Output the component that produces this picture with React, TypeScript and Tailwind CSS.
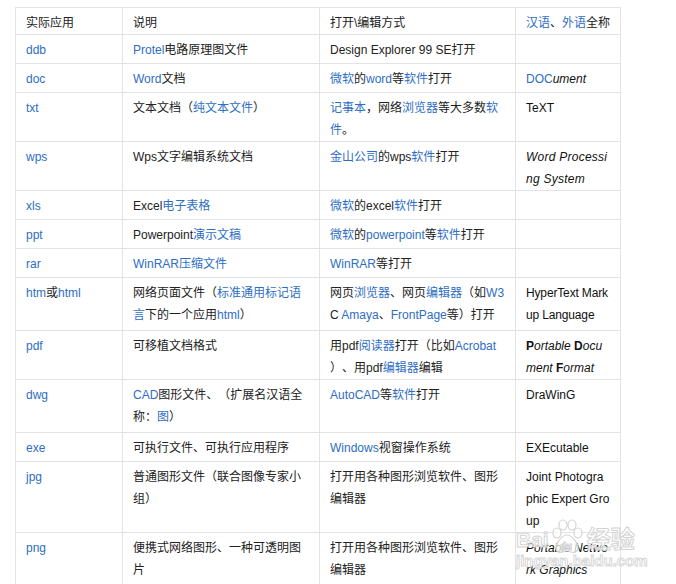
import type { ReactNode } from "react";

const A = ({ children }: { children: ReactNode }) => (
  <span className="text-[#2e6ec4]">{children}</span>
);
const B = ({ children }: { children: ReactNode }) => (
  <b className="font-bold">{children}</b>
);
const I = ({ children }: { children: ReactNode }) => <i className="italic">{children}</i>;

type Row = { h: string; ext: ReactNode; desc: ReactNode; open: ReactNode; full: ReactNode };

const rows: Row[] = [
  { h: "h-[29px]", ext: <A>ddb</A>, desc: <><A>Protel</A>电路原理图文件</>, open: "Design Explorer 99 SE打开", full: null },
  {
    h: "h-[29px]",
    ext: <A>doc</A>,
    desc: <><A>Word</A>文档</>,
    open: <><A>微软</A>的<A>word</A>等<A>软件</A>打开</>,
    full: <><A>DOC</A><I>ument</I></>,
  },
  {
    h: "h-[49px]",
    ext: <A>txt</A>,
    desc: <>文本文档（<A>纯文本文件</A>）</>,
    open: <><A>记事本</A>，网络<A>浏览器</A>等大多数<A>软件</A>。</>,
    full: "TeXT",
  },
  {
    h: "h-[49px]",
    ext: <A>wps</A>,
    desc: "Wps文字编辑系统文档",
    open: <><A>金山公司</A>的wps<A>软件</A>打开</>,
    full: <i className="italic tracking-[0.25px]">Word Processing System</i>,
  },
  { h: "h-[29px]", ext: <A>xls</A>, desc: <>Excel<A>电子表格</A></>, open: <><A>微软</A>的excel<A>软件</A>打开</>, full: null },
  {
    h: "h-[29px]",
    ext: <A>ppt</A>,
    desc: <>Powerpoint<A>演示文稿</A></>,
    open: <><A>微软</A>的<A>powerpoint</A>等<A>软件</A>打开</>,
    full: null,
  },
  { h: "h-[29px]", ext: <A>rar</A>, desc: <A>WinRAR压缩文件</A>, open: <><A>WinRAR</A>等打开</>, full: null },
  {
    h: "h-[53px]",
    ext: <><A>htm</A>或<A>html</A></>,
    desc: <>网络页面文件（<A>标准通用标记语言</A>下的一个应用<A>html</A>）</>,
    open: <>网页<A>浏览器</A>、网页<A>编辑器</A>（如<A>W3</A>C <A>Amaya</A>、<A>FrontPage</A>等）打开</>,
    full: <span className="tracking-[-0.15px]">HyperText Markup Language</span>,
  },
  {
    h: "h-[49px]",
    ext: <A>pdf</A>,
    desc: "可移植文档格式",
    open: <>用pdf<A>阅读器</A>打开（比如<A>Acrobat</A>）、用pdf<A>编辑器</A>编辑</>,
    full: <><B>P</B><I>ortable </I><B>D</B><I>ocument </I><B>F</B><I>ormat</I></>,
  },
  {
    h: "h-[53px]",
    ext: <A>dwg</A>,
    desc: <><A>CAD</A>图形文件、（扩展名汉语全称：<A>图</A>）</>,
    open: <><A>AutoCAD</A>等<A>软件</A>打开</>,
    full: "DraWinG",
  },
  { h: "h-[29px]", ext: <A>exe</A>, desc: "可执行文件、可执行应用程序", open: <><A>Windows</A>视窗操作系统</>, full: "EXEcutable" },
  {
    h: "h-[71px]",
    ext: <A>jpg</A>,
    desc: "普通图形文件（联合图像专家小组）",
    open: "打开用各种图形浏览软件、图形编辑器",
    full: "Joint Photographic Expert Group",
  },
  {
    h: "h-[71px]",
    ext: <A>png</A>,
    desc: "便携式网络图形、一种可透明图片",
    open: "打开用各种图形浏览软件、图形编辑器",
    full: <I>Portable Network Graphics</I>,
  },
];

const cell =
  "border border-[#e3e3e3] pl-[10px] pt-[4px] align-top text-left font-normal [line-break:anywhere] [word-break:break-all] [text-spacing-trim:space-all]";
const pad = "pr-[10px]";
const padLast = "pr-[10.5px]";

function Watermark() {
  return (
    <div className="pointer-events-none absolute left-[516px] top-[518px] flex flex-col">
      <div className="flex items-end">
        <span className="text-[21px] font-bold leading-[22px] text-white/70 [-webkit-text-stroke:1px_#d4d4d4]">
          Bai
        </span>
        <svg width="36" height="36" viewBox="0 0 36 36" className="-mb-[3px]">
          <g fill="rgba(255,255,255,0.7)" stroke="#d4d4d4" strokeWidth="1.2">
            <ellipse cx="8" cy="15" rx="4" ry="5" />
            <ellipse cx="14" cy="7" rx="4" ry="5" />
            <ellipse cx="23" cy="7" rx="4" ry="5" />
            <ellipse cx="29" cy="15" rx="4" ry="5" />
            <path d="M18 17c-5 0-11 8-11 13 0 4 4 5 7 4 2-1 6-1 8 0 3 1 7 0 7-4 0-5-6-13-11-13z" />
          </g>
          <text x="11" y="32" fontSize="10" fontWeight="bold" fill="none" stroke="#d4d4d4" strokeWidth="0.8" fontFamily="Liberation Sans, sans-serif">
            du
          </text>
        </svg>
        <span className="ml-[2px] text-[24px] font-bold leading-[26px] text-white/70 [-webkit-text-stroke:1px_#d4d4d4] [font-family:'Noto_Sans_CJK_SC',sans-serif]">
          经验
        </span>
      </div>
      <span className="mt-[2px] text-[15px] font-bold leading-[16px] text-white/70 [-webkit-text-stroke:1px_#d8d8d8]">
        jingyan.baidu.com
      </span>
    </div>
  );
}

export default function App() {
  return (
    <div className="relative h-[584px] w-[676px] overflow-hidden bg-white pl-[15px] pt-[7px] text-[12px] leading-[22px] text-[#222] [font-family:'Liberation_Sans','Noto_Sans_CJK_SC',sans-serif]">
      <table className="w-[605px] table-fixed border-collapse">
        <colgroup>
          <col className="w-[107px]" />
          <col className="w-[197px]" />
          <col className="w-[196px]" />
          <col className="w-[105px]" />
        </colgroup>
        <thead>
          <tr className="h-[27px]">
            <th className={`${cell} ${pad}`}>实际应用</th>
            <th className={`${cell} ${pad}`}>说明</th>
            <th className={`${cell} ${pad}`}>打开\编辑方式</th>
            <th className={`${cell} ${padLast} whitespace-nowrap`}>
              <A>汉语</A>、<A>外语</A>全称
            </th>
          </tr>
        </thead>
        <tbody>
          {rows.map((r, i) => (
            <tr key={i} className={r.h}>
              <td className={`${cell} ${pad}`}>{r.ext}</td>
              <td className={`${cell} ${pad}`}>{r.desc}</td>
              <td className={`${cell} ${pad}`}>{r.open}</td>
              <td className={`${cell} ${padLast} text-[#111]`}>{r.full}</td>
            </tr>
          ))}
        </tbody>
      </table>
      <Watermark />
    </div>
  );
}
